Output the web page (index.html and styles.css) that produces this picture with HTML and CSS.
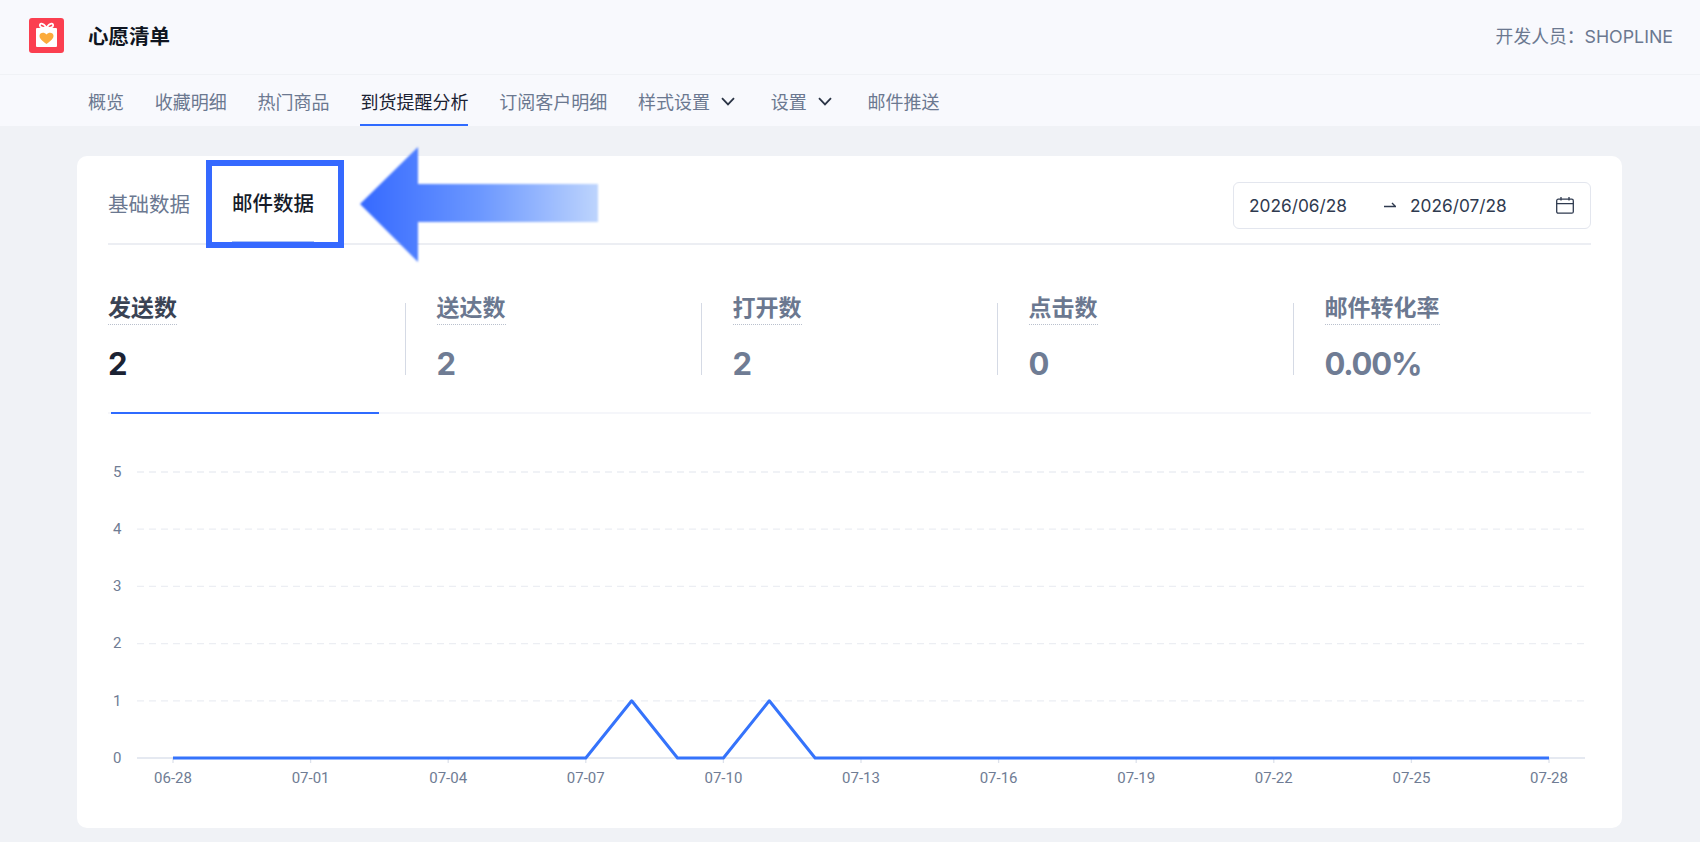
FILE: index.html
```html
<!DOCTYPE html>
<html lang="zh-CN">
<head>
    <meta charset="UTF-8">
    <meta name="viewport" content="width=device-width, initial-scale=1.0">
    <title>心愿清单</title>
    <link rel="stylesheet" href="styles.css">
</head>
<body>
    <header class="top-bar">
        <div class="brand">
            <svg class="brand-logo" viewBox="0 0 35 35" width="35" height="35">
                <rect width="35" height="35" rx="3" fill="#fb3f50"/>
                <rect x="7" y="10" width="21" height="19" rx="1" fill="#fff"/>
                <path d="M17.5 10 C14 4 10 5 11 8 C11.5 10 15 10 17.5 10 C20 10 23.5 10 24 8 C25 5 21 4 17.5 10Z" fill="none" stroke="#fff" stroke-width="1.8"/>
                <path d="M17.5 26 C12.5 22.5 10.5 20.5 10.5 17.8 C10.5 14.2 15.5 13.6 17.5 16.6 C19.5 13.6 24.5 14.2 24.5 17.8 C24.5 20.5 22.5 22.5 17.5 26Z" fill="#fbab3c"/>
            </svg>
            <span class="brand-name">心愿清单</span>
        </div>
        <div class="developer">开发人员：SHOPLINE</div>
    </header>

    <nav class="main-nav">
        <a class="nav-item">概览</a>
        <a class="nav-item">收藏明细</a>
        <a class="nav-item">热门商品</a>
        <a class="nav-item active">到货提醒分析</a>
        <a class="nav-item">订阅客户明细</a>
        <a class="nav-item">样式设置
            <svg class="chevron" viewBox="0 0 14 9" width="14" height="9"><path d="M1 1.2 L7 7.4 L13 1.2" fill="none" stroke="#2b3446" stroke-width="1.8"/></svg>
        </a>
        <a class="nav-item">设置
            <svg class="chevron" viewBox="0 0 14 9" width="14" height="9"><path d="M1 1.2 L7 7.4 L13 1.2" fill="none" stroke="#2b3446" stroke-width="1.8"/></svg>
        </a>
        <a class="nav-item">邮件推送</a>
    </nav>

    <main class="content">
        <section class="card">
            <div class="card-head">
                <div class="tabs">
                    <a class="tab">基础数据</a>
                    <a class="tab tab-active">邮件数据</a>
                </div>
                <div class="date-range">
                    <span class="date">2026/06/28</span>
                    <svg class="date-arrow" viewBox="0 0 12 6" width="12" height="6"><path d="M0 4.5 H11.5 L8 1" fill="none" stroke="#2f3a4f" stroke-width="1.4"/></svg>
                    <span class="date">2026/07/28</span>
                    <svg class="calendar" viewBox="0 0 18 17" width="18" height="17">
                        <rect x="0.7" y="2.2" width="16.6" height="14" rx="1.5" fill="none" stroke="#2f3a4f" stroke-width="1.3"/>
                        <path d="M0.7 6.6 H17.3 M5 0 V3.5 M13 0 V3.5" fill="none" stroke="#2f3a4f" stroke-width="1.3"/>
                    </svg>
                </div>
            </div>

            <!-- 标注：高亮框和箭头 -->
            <div class="mark-box"></div>
            <svg class="mark-arrow" viewBox="0 0 240 116" width="240" height="116">
                <defs>
                    <linearGradient id="arrowFill" x1="0" y1="0" x2="1" y2="0">
                        <stop offset="0" stop-color="#3569ff"/>
                        <stop offset="0.5" stop-color="#6b97ff"/>
                        <stop offset="1" stop-color="#bdd4fd"/>
                    </linearGradient>
                </defs>
                <polygon points="0,57 58,0 58,37 238,37 238,75 58,75 58,115" fill="url(#arrowFill)"/>
            </svg>

            <div class="stats">
                <div class="stat stat-active">
                    <div class="stat-label">发送数</div>
                    <div class="stat-value">2</div>
                </div>
                <div class="stat">
                    <div class="stat-label">送达数</div>
                    <div class="stat-value">2</div>
                </div>
                <div class="stat">
                    <div class="stat-label">打开数</div>
                    <div class="stat-value">2</div>
                </div>
                <div class="stat">
                    <div class="stat-label">点击数</div>
                    <div class="stat-value">0</div>
                </div>
                <div class="stat">
                    <div class="stat-label">邮件转化率</div>
                    <div class="stat-value">0.00%</div>
                </div>
            </div>
            <div class="stat-track"><div class="stat-track-bar"></div></div>

            <svg class="chart" viewBox="0 0 1483 400" width="1483" height="400">
                <g class="grid">
                    <line x1="29" x2="1477" y1="58" y2="58"/>
                    <line x1="29" x2="1477" y1="115.2" y2="115.2"/>
                    <line x1="29" x2="1477" y1="172.4" y2="172.4"/>
                    <line x1="29" x2="1477" y1="229.6" y2="229.6"/>
                    <line x1="29" x2="1477" y1="286.8" y2="286.8"/>
                </g>
                <g class="axis">
                    <line x1="29" x2="1477" y1="344" y2="344"/>
                    <path d="M65 344v5M202.600 344v5M340.200 344v5M477.800 344v5M615.400 344v5M753 344v5M890.600 344v5M1028.200 344v5M1165.800 344v5M1303.400 344v5M1441 344v5"/>
                </g>
                <g class="y-labels">
                    <text x="5" y="62.500">5</text>
                    <text x="5" y="120">4</text>
                    <text x="5" y="177">3</text>
                    <text x="5" y="234">2</text>
                    <text x="5" y="291.500">1</text>
                    <text x="5" y="349">0</text>
                </g>
                <g class="x-labels">
                    <text x="65" y="369">06-28</text>
                    <text x="202.600" y="369">07-01</text>
                    <text x="340.200" y="369">07-04</text>
                    <text x="477.800" y="369">07-07</text>
                    <text x="615.400" y="369">07-10</text>
                    <text x="753" y="369">07-13</text>
                    <text x="890.600" y="369">07-16</text>
                    <text x="1028.200" y="369">07-19</text>
                    <text x="1165.800" y="369">07-22</text>
                    <text x="1303.400" y="369">07-25</text>
                    <text x="1441" y="369">07-28</text>
                </g>
                <polyline class="line" points="65,344 477.800,344 523.700,286.800 569.500,344 615.400,344 661.300,286.800 707.100,344 1441,344"/>
            </svg>
        </section>
    </main>
</body>
</html>
```

FILE: styles.css
```css
body {
    font-family: 'Inter', 'Noto Sans CJK SC', sans-serif;
    background-color: #f0f2f6;
    color: #2f3a4f;
    margin: 0;
    padding: 0;
    overflow: hidden;
}

.top-bar {
    height: 70px;
    box-sizing: content-box;
    background-color: #f8f9fd;
    border-bottom: 1px solid #f0f2f6;
    display: flex;
    justify-content: space-between;
    align-items: center;
    padding: 0 27px 4px 29px;
}

.brand {
    display: flex;
    align-items: center;
    gap: 24px;
}

.brand-logo {
    display: block;
}

.brand-name {
    font-size: 20.5px;
    font-weight: 700;
    color: #0f1521;
}

.developer {
    font-size: 17.8px;
    color: #6b7890;
}

.main-nav {
    height: 51px;
    background-color: #f8f9fd;
    display: flex;
    gap: 30.8px;
    padding-left: 88px;
}

.nav-item {
    font-size: 18px;
    color: #6b7890;
    display: flex;
    align-items: center;
    gap: 11px;
    border-bottom: 2px solid transparent;
    padding-top: 3px;
    box-sizing: border-box;
}

.nav-item.active {
    color: #1b2233;
    border-bottom-color: #2f6bff;
}

.chevron {
    margin-right: 5px;
}

.content {
    padding: 30px 78px 15px 77px;
}

.card {
    position: relative;
    height: 672px;
    box-sizing: border-box;
    background-color: #ffffff;
    border-radius: 10px;
    padding: 0 31px;
}

.card-head {
    height: 87px;
    box-sizing: content-box;
    border-bottom: 2px solid #eceef3;
    display: flex;
    justify-content: space-between;
    align-items: center;
}

.tabs {
    display: flex;
    gap: 42px;
    align-self: stretch;
}

.tab {
    font-size: 20.5px;
    color: #6b7890;
    display: flex;
    align-items: center;
    height: 100%;
    padding-top: 6px;
    box-sizing: border-box;
}

.tab-active {
    color: #161c2a;
    font-weight: 500;
    border-bottom: 2px solid #a9c0f5;
}

.date-range {
    width: 358px;
    height: 47px;
    box-sizing: border-box;
    border: 1px solid #e3e6ee;
    border-radius: 6px;
    display: flex;
    align-items: center;
    padding: 0 16px 0 15px;
    font-size: 17.3px;
    margin-top: 11px;
}

.date-arrow {
    margin: 0 14px 0 37px;
}

.calendar {
    margin-left: auto;
}

.mark-box {
    position: absolute;
    left: 129px;
    top: 4px;
    width: 138px;
    height: 88px;
    box-sizing: border-box;
    border: 6px solid #3569ff;
}

.mark-arrow {
    position: absolute;
    left: 283px;
    top: -9px;
    filter: blur(0.8px);
}

.stats {
    display: flex;
    margin-top: 48px;
    height: 88px;
}

.stat {
    width: 296px;
    padding-left: 31.5px;
    box-sizing: border-box;
    position: relative;
    color: #6b7890;
}

.stat:first-child {
    padding-left: 0;
    width: 297px;
}

.stat:not(:first-child)::before {
    content: "";
    position: absolute;
    left: 0;
    top: 10px;
    width: 1px;
    height: 72px;
    background-color: #d5dae5;
}

.stat-label {
    display: inline-block;
    font-size: 23px;
    line-height: 31px;
    font-weight: 600;
    border-bottom: 1px dotted #b9c0cd;
}

.stat-value {
    font-size: 31px;
    line-height: 40px;
    font-weight: 700;
    letter-spacing: -1.2px;
    margin-top: 19px;
    color: #6f7c94;
}

.stat-active .stat-label {
    color: #3a4354;
}

.stat-active .stat-value {
    color: #1b2233;
}

.stat-track {
    margin-top: 31px;
    height: 2px;
    background-color: #f5f6fa;
}

.stat-track-bar {
    width: 268px;
    height: 2px;
    margin-left: 3px;
    background-color: #2f6bff;
}

.chart {
    display: block;
}

.grid line {
    stroke: #eceef3;
    stroke-width: 1.3;
    stroke-dasharray: 7 5;
}

.axis line,
.axis path {
    stroke: #dde2ec;
    stroke-width: 1.3;
    fill: none;
}

.y-labels text,
.x-labels text {
    font-family: 'Roboto', sans-serif;
    font-size: 15px;
    fill: #6f7c94;
}

.x-labels text {
    text-anchor: middle;
}

.line {
    fill: none;
    stroke: #3573fb;
    stroke-width: 3;
    stroke-linejoin: round;
}
```
